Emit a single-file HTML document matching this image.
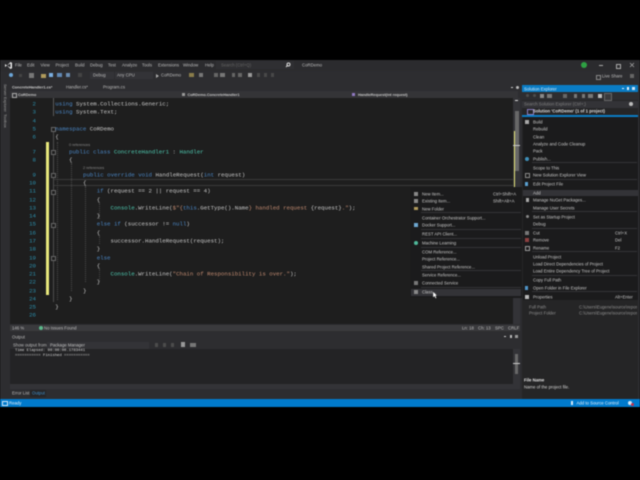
<!DOCTYPE html>
<html><head><meta charset="utf-8">
<style>
html,body{margin:0;padding:0;width:640px;height:480px;background:#000;overflow:hidden}
#r{position:absolute;left:0;top:0;width:640px;height:480px;filter:blur(.5px);font-family:"Liberation Sans",sans-serif;font-size:4.3px;color:#bdbdbd}
#r div,#r span.t{position:absolute;white-space:nowrap}
.b{position:absolute}
.m{transform:translateY(-50%)}
.c{font-family:"Liberation Mono",monospace;font-size:5.76px;color:#c8c8c8;transform:translateY(-50%);left:55.3px}
.n{font-family:"Liberation Mono",monospace;font-size:5.76px;color:#2b91af;transform:translateY(-50%);right:604px;text-align:right}
.k{color:#4a86c4}.g{color:#4ec9b0}.s{color:#c08a70}
.l{font-size:3.8px;color:#8a8a8a;transform:translateY(-50%)}
.i{font-size:4.3px;color:#c8c8c8;transform:translateY(-50%)}
.sep{height:1px;background:#333336}
.dg{width:0;border-left:1px dotted #4a4a4a}
</style></head><body><div id="r">
<!-- chrome -->
<div style="left:0;top:60px;width:640px;height:347px;background:#2d2d30"></div>
<div style="left:0;top:60px;width:640px;height:11px;background:#2b2b2e"></div>
<!-- logo -->
<svg class="b" style="left:4px;top:61px" width="9" height="9" viewBox="0 0 9 9"><path d="M1 3l2 1.500L6.500 1 8 1.800V7.200L6.500 8 3 4.500 1 6zM3 4.500l3.500 2V2.500z" fill="#e8e8e8" fill-rule="evenodd"/></svg>
<!-- menu -->
<div class="m" style="left:15px;top:65px">File</div><div class="m" style="left:27px;top:65px">Edit</div><div class="m" style="left:40.500px;top:65px">View</div><div class="m" style="left:55.500px;top:65px">Project</div><div class="m" style="left:75px;top:65px">Build</div><div class="m" style="left:90px;top:65px">Debug</div><div class="m" style="left:108px;top:65px">Test</div><div class="m" style="left:122px;top:65px">Analyze</div><div class="m" style="left:142px;top:65px">Tools</div><div class="m" style="left:158px;top:65px">Extensions</div><div class="m" style="left:183px;top:65px">Window</div><div class="m" style="left:205px;top:65px">Help</div>
<div style="left:216px;top:61px;width:78px;height:8px;background:#2f2f32"></div>
<div class="m" style="left:221px;top:65px;color:#666">Search (Ctrl+Q)</div>
<svg class="b" style="left:285px;top:62px" width="6" height="6" viewBox="0 0 6 6"><circle cx="3.500" cy="2.500" r="1.500" fill="none" stroke="#ddd"/><path d="M2.500 3.500L1 5" stroke="#ddd"/></svg>
<div class="m" style="left:302px;top:65px">CoRDemo</div>
<div style="left:581px;top:62px;width:6px;height:6px;border-radius:3px;background:#2ea043"></div>
<div style="left:599px;top:65px;width:4px;height:1px;background:#aaa"></div>
<div style="left:615.500px;top:63.500px;width:3px;height:3px;border:1px solid #aaa"></div>
<svg class="b" style="left:629px;top:62px" width="6" height="6" viewBox="0 0 6 6"><path d="M1 1l4 4M5 1l-4 4" stroke="#aaa" stroke-width=".7"/></svg>
<div class="m" style="left:602px;top:76px">Live Share</div>
<div style="left:596px;top:75px;width:3px;height:3px;border:.6px solid #888"></div>
<div style="left:630px;top:74px;width:4px;height:4px;background:#666"></div>
<!-- toolbar -->
<div style="left:9px;top:73px;width:4px;height:4px;border-radius:3px;background:#6ba5d6"></div>
<div style="left:19px;top:74px;width:3px;height:3px;background:#444"></div>
<div style="left:29px;top:73px;width:5px;height:5px;background:#777"></div>
<div style="left:41px;top:73.500px;width:5px;height:4px;background:#b09a5c"></div>
<div style="left:49px;top:73px;width:4px;height:4px;background:#7aaee0"></div>
<div style="left:57px;top:73px;width:5px;height:4px;background:#6088b4"></div>
<div style="left:66px;top:73px;width:4px;height:4px;background:#6a8cb0"></div>
<div style="left:78px;top:73px;width:4px;height:4px;background:#444"></div>
<div style="left:90px;top:71.500px;width:24px;height:7px;background:#333337"></div>
<div class="m" style="left:93px;top:75px">Debug</div>
<div style="left:115px;top:71.500px;width:38px;height:7px;background:#333337"></div>
<div class="m" style="left:117px;top:75px">Any CPU</div>
<div style="left:156px;top:73.500px;width:0;height:0;border-left:3px solid #aaa;border-top:2px solid transparent;border-bottom:2px solid transparent"></div>
<div class="m" style="left:161px;top:75px">CoRDemo</div>
<div style="left:189px;top:73px;width:5px;height:4px;background:#8a7c4a"></div>
<div style="left:199px;top:73px;width:4px;height:4px;background:#777"></div>
<div style="left:214px;top:73px;width:4px;height:4px;background:#666"></div><div style="left:220px;top:73px;width:5px;height:4px;background:#777"></div>
<div style="left:232px;top:73px;width:3px;height:4px;background:#666"></div><div style="left:238px;top:73px;width:4px;height:4px;background:#666"></div>
<div style="left:248px;top:73px;width:4px;height:4px;background:#999"></div><div style="left:257px;top:73px;width:3px;height:4px;background:#484848"></div><div style="left:264px;top:73px;width:3px;height:4px;background:#484848"></div><div style="left:271px;top:73px;width:3px;height:4px;background:#484848"></div>
<!-- left strip text -->
<div style="left:3px;top:84px;font-size:4px;writing-mode:vertical-rl;color:#a0a0a0">Server Explorer</div>
<div style="left:3px;top:114px;font-size:4px;writing-mode:vertical-rl;color:#a0a0a0">Toolbox</div>
<!-- doc tabs -->
<div class="m" style="left:12px;top:87.300px;color:#ccc;font-size:3.900px;font-weight:bold">ConcreteHandler1.cs*</div>
<div class="m" style="left:66px;top:87.300px">Handler.cs*</div>
<div class="m" style="left:103px;top:87.300px">Program.cs</div>
<!-- nav bar -->
<div style="left:10px;top:90.500px;width:508px;height:7.500px;background:#343437"></div>
<div class="m" style="left:18px;top:94.500px;font-size:3.800px;color:#c4c4c4;font-weight:bold">CoRDemo</div>
<div style="left:12px;top:93px;width:3px;height:3px;border:.5px solid #aaa"></div>
<div class="m" style="left:187.500px;top:94.500px;font-size:3.800px;color:#c4c4c4;font-weight:bold">CoRDemo.ConcreteHandler1</div>
<div style="left:182px;top:93px;width:3px;height:3px;background:#999"></div>
<div class="m" style="left:358px;top:94.500px;font-size:3.800px;color:#c4c4c4;font-weight:bold">HandleRequest(int request)</div>
<div style="left:352px;top:93px;width:3px;height:3px;background:#8f78c0"></div>
<div style="left:511px;top:87px;width:2px;height:1px;background:#ccc"></div><div style="left:516px;top:85.500px;width:3px;height:3px;border-radius:2px;background:#bbb"></div>
<!-- editor -->
<div style="left:10px;top:98px;width:503px;height:226px;background:#1e1e1e"></div>
<div style="left:513px;top:98px;width:7px;height:226px;background:#333337"></div>
<div style="left:514.500px;top:111px;width:4px;height:60px;background:#686868"></div>
<div style="left:514px;top:131px;width:1px;height:95px;background:#e4e47a"></div>
<div style="left:513px;top:145px;width:7px;height:.7px;background:#ccc"></div>
<div style="left:515px;top:100px;width:3px;height:1px;background:#ddd"></div>
<div style="left:46px;top:141.500px;width:3px;height:153.500px;background:#e8e87c"></div>
<div style="left:54px;top:178.700px;width:459px;height:7.800px;border:.5px solid #3a3a3a;border-width:.6px 0;box-sizing:border-box"></div>
<!-- guides -->
<div class="dg" style="left:57px;top:142px;height:158px"></div>
<div class="dg" style="left:70.500px;top:163px;height:128px"></div>
<div class="dg" style="left:84.500px;top:186px;height:96px"></div>
<div class="dg" style="left:98.500px;top:203px;height:16px;border-color:#444"></div>
<div class="dg" style="left:98.500px;top:236px;height:8px;border-color:#444"></div>
<div class="dg" style="left:98.500px;top:269px;height:12px;border-color:#444"></div>
<div style="left:52.500px;top:98px;width:.7px;height:18px;background:#5a5a5a"></div>
<div style="left:52.500px;top:130px;width:.7px;height:172px;background:#4c4c4c"></div>
<div style="left:50.500px;top:127px;width:3px;height:3px;border:.5px solid #666;background:#1e1e1e"></div>
<div style="left:50.500px;top:150px;width:3px;height:3px;border:.5px solid #666;background:#1e1e1e"></div>
<div style="left:50.500px;top:173px;width:3px;height:3px;border:.5px solid #666;background:#1e1e1e"></div>
<div style="left:50.500px;top:190px;width:3px;height:3px;border:.5px solid #666;background:#1e1e1e"></div>
<div style="left:50.500px;top:223px;width:3px;height:3px;border:.5px solid #666;background:#1e1e1e"></div>
<div style="left:50.500px;top:256px;width:3px;height:3px;border:.5px solid #666;background:#1e1e1e"></div>
<!-- line numbers -->
<div class="n" style="top:104px">2</div><div class="n" style="top:112.300px">3</div><div class="n" style="top:120.700px">4</div><div class="n" style="top:129px">5</div><div class="n" style="top:137.300px">6</div><div class="n" style="top:151.700px">7</div><div class="n" style="top:160px">8</div><div class="n" style="top:174.700px">9</div><div class="n" style="top:183.300px">10</div><div class="n" style="top:191.300px">11</div><div class="n" style="top:199.600px">12</div><div class="n" style="top:207.800px">13</div><div class="n" style="top:216.100px">14</div><div class="n" style="top:224.400px">15</div><div class="n" style="top:232.600px">16</div><div class="n" style="top:240.900px">17</div><div class="n" style="top:249.200px">18</div><div class="n" style="top:257.500px">19</div><div class="n" style="top:265.700px">20</div><div class="n" style="top:274px">21</div><div class="n" style="top:282.300px">22</div><div class="n" style="top:290.500px">23</div><div class="n" style="top:298.800px">24</div><div class="n" style="top:307px">25</div><div class="n" style="top:315.300px">26</div>
<!-- code -->
<div class="c" style="top:104px"><span class="k">using</span> System.Collections.Generic;</div>
<div class="c" style="top:112.300px"><span class="k">using</span> System.Text;</div>
<div class="c" style="top:129px"><span class="k">namespace</span> CoRDemo</div>
<div class="c" style="top:137.300px">{</div>
<div class="l" style="left:69px;top:145px">0 references</div>
<div class="c" style="top:151.700px;left:69px"><span class="k">public class</span> <span class="g">ConcreteHandler1</span> : <span class="g">Handler</span></div>
<div class="c" style="top:160px;left:69px">{</div>
<div class="l" style="left:83px;top:168px">2 references</div>
<div class="c" style="top:174.700px;left:83px"><span class="k">public override void</span> HandleRequest(<span class="k">int</span> request)</div>
<div class="c" style="top:183.300px;left:83px">{</div>
<div class="c" style="top:191.300px;left:96.700px"><span class="k">if</span> (request == 2 || request == 4)</div>
<div class="c" style="top:199.600px;left:96.700px">{</div>
<div class="c" style="top:207.800px;left:110.500px"><span class="g">Console</span>.WriteLine(<span class="s">$"{</span><span class="k">this</span>.GetType().Name<span class="s">} handled request </span>{request}<span class="s">."</span>);</div>
<div class="c" style="top:216.100px;left:96.700px">}</div>
<div class="c" style="top:224.400px;left:96.700px"><span class="k">else if</span> (successor != <span class="k">null</span>)</div>
<div class="c" style="top:232.600px;left:96.700px">{</div>
<div class="c" style="top:240.900px;left:110.500px">successor.HandleRequest(request);</div>
<div class="c" style="top:249.200px;left:96.700px">}</div>
<div class="c" style="top:257.500px;left:96.700px"><span class="k">else</span></div>
<div class="c" style="top:265.700px;left:96.700px">{</div>
<div class="c" style="top:274px;left:110.500px"><span class="g">Console</span>.WriteLine(<span class="s">"Chain of Responsibility is over."</span>);</div>
<div class="c" style="top:282.300px;left:96.700px">}</div>
<div class="c" style="top:290.500px;left:83px">}</div>
<div class="c" style="top:298.800px;left:69px">}</div>
<div class="c" style="top:307px">}</div>
<!-- editor status -->
<div style="left:10px;top:324.500px;width:510px;height:6.500px;background:#3a3a3d"></div>
<div class="m" style="left:12px;top:328px">146 %</div>
<div style="left:38.500px;top:326px;width:4px;height:4px;border-radius:2px;background:#5cb88a"></div>
<div class="m" style="left:44px;top:328px">No Issues Found</div>
<div class="m" style="left:462px;top:328px">Ln: 18</div><div class="m" style="left:478px;top:328px">Ch: 13</div><div class="m" style="left:495px;top:328px">SPC</div><div class="m" style="left:508px;top:328px">CRLF</div>
<!-- output -->
<div class="m" style="left:12px;top:337px">Output</div>
<div style="left:504px;top:336px;width:2px;height:1px;background:#ccc"></div><div style="left:510px;top:335px;width:2px;height:3px;background:#bbb"></div><div style="left:515px;top:335px;width:3px;height:3px;background:#999"></div>
<div class="m" style="left:13px;top:345px">Show output from:</div>
<div style="left:47px;top:341.500px;width:102px;height:7px;background:#333337"></div>
<div class="m" style="left:50px;top:345px;color:#c4c4c4">Package Manager</div>
<div style="left:155px;top:343px;width:3px;height:4px;background:#4c4c4c"></div><div style="left:163px;top:343px;width:3px;height:4px;background:#4c4c4c"></div><div style="left:171px;top:343px;width:3px;height:4px;background:#4c4c4c"></div><div style="left:181px;top:342px;width:4px;height:5px;background:#999"></div><div style="left:190px;top:343px;width:6px;height:4px;background:#777"></div>
<div style="left:10px;top:349px;width:503px;height:35px;background:#232325"></div>
<div style="left:513px;top:349px;width:7px;height:35px;background:#333337"></div>
<div style="left:515px;top:354px;width:3px;height:20px;background:#686868"></div>
<div style="left:513px;top:363px;width:7px;height:.7px;background:#ccc"></div>
<div style="left:10px;top:384px;width:510px;height:5px;background:#333337"></div>
<div class="c" style="left:15px;top:351.300px;font-size:3.900px;color:#d8d8d8">Time Elapsed: 00:00:00.1783441</div>
<div class="c" style="left:15px;top:356.300px;font-size:3.900px;color:#d8d8d8">=========== Finished ===========</div>
<div class="m" style="left:12px;top:393px">Error List</div>
<div style="left:30px;top:390px;width:16px;height:7px;background:#252527"></div>
<div class="m" style="left:32px;top:393px;color:#3f8fca">Output</div>
<!-- solution explorer -->
<div style="left:522px;top:85px;width:116px;height:7px;background:#0a7cc4"></div>
<div class="m" style="left:524px;top:88.500px;color:#d8ecfa">Solution Explorer</div>
<div style="left:622px;top:88px;width:2px;height:1px;background:#e4f1fb"></div><div style="left:627px;top:87px;width:2px;height:3px;background:#e4f1fb"></div><div style="left:632px;top:87px;width:3px;height:3px;background:#cfe6f7"></div>
<div style="left:522px;top:92px;width:116px;height:307px;background:#252526"></div>
<div style="left:522px;top:92px;width:116px;height:8px;background:#2d2d30"></div>
<div style="left:526px;top:94px;width:3px;height:3px;border-radius:2px;background:#4c4c4c"></div><div style="left:533px;top:94px;width:3px;height:3px;border-radius:2px;background:#4c4c4c"></div><div style="left:540px;top:93.500px;width:4px;height:4px;background:#888"></div><div style="left:547px;top:93.500px;width:5px;height:4px;background:#777"></div><div style="left:563px;top:93.500px;width:4px;height:4px;background:#666"></div><div style="left:574px;top:93.500px;width:3px;height:4px;background:#777"></div><div style="left:582px;top:93.500px;width:3px;height:4px;background:#777"></div><div style="left:588px;top:93.500px;width:5px;height:4px;background:#777"></div><div style="left:598px;top:93.500px;width:4px;height:4px;background:#bbb"></div>
<div style="left:603.500px;top:92.500px;width:6px;height:6px;border:.5px solid #666;background:#3a3a3d"></div>
<div style="left:522px;top:100.500px;width:116px;height:7px;background:#333337"></div>
<div class="m" style="left:524px;top:104px;color:#808080">Search Solution Explorer (Ctrl+;)</div>
<div style="left:629px;top:102px;width:4px;height:4px;border-radius:2px;background:#bbb"></div>
<div style="left:527px;top:109px;width:5px;height:4px;border:.5px solid #8a7cc0"></div>
<div class="m" style="left:533px;top:111.300px;color:#ddd;font-weight:bold">Solution 'CoRDemo' (1 of 1 project)</div>
<div style="left:522px;top:115px;width:116px;height:2px;background:#0a7cc4"></div>
<div class="m" style="left:529px;top:306.700px;color:#909090">Full Path</div><div class="m" style="left:579px;top:306.700px;color:#909090;width:58px;overflow:hidden">C:\Users\Eugene\source\repos\Co</div>
<div class="m" style="left:529px;top:313.300px;color:#909090">Project Folder</div><div class="m" style="left:579px;top:313.300px;color:#909090;width:58px;overflow:hidden">C:\Users\Eugene\source\repos\Co</div>
<div class="m" style="left:524px;top:380.300px;color:#e4e4e4;font-weight:bold">File Name</div>
<div class="m" style="left:524px;top:386.500px;color:#d4d4d4">Name of the project file.</div>
<!-- status bar -->
<div style="left:0;top:399px;width:640px;height:8px;background:#007acc"></div>
<div style="left:2px;top:401px;width:4px;height:3px;border:.6px solid #cfe6f7"></div>
<div class="m" style="left:9px;top:403px;color:#e4f1fb">Ready</div>
<div class="m" style="left:576.500px;top:403px;color:#e4f1fb">Add to Source Control</div>
<div style="left:571px;top:401px;width:2px;height:4px;background:#cfe6f7"></div>
<div style="left:628px;top:400.500px;width:4px;height:4px;background:#cfe6f7;border-radius:2px"></div>
<div style="left:631px;top:403px;width:3px;height:3px;background:#c4304a;border-radius:2px"></div>
<!-- context menu right -->
<div style="left:522.500px;top:117px;width:115.500px;height:183px;background:#1b1b1c"></div>
<div style="left:523px;top:190px;width:115px;height:6px;background:#333337"></div>
<div class="i" style="left:533px;top:122px">Build</div><div class="i" style="left:533px;top:129px">Rebuild</div><div class="i" style="left:533px;top:136.500px">Clean</div><div class="i" style="left:533px;top:144px">Analyze and Code Cleanup</div><div class="i" style="left:533px;top:151px">Pack</div><div class="i" style="left:533px;top:158.500px">Publish...</div>
<div class="sep" style="left:532px;top:162px;width:105px"></div>
<div class="i" style="left:533px;top:167.500px">Scope to This</div><div class="i" style="left:533px;top:175px">New Solution Explorer View</div>
<div class="sep" style="left:532px;top:179px;width:105px"></div>
<div class="i" style="left:533px;top:184px">Edit Project File</div>
<div class="i" style="left:533px;top:192.700px">Add</div><div class="i" style="left:533px;top:200px">Manage NuGet Packages...</div><div class="i" style="left:533px;top:207.500px">Manage User Secrets</div>
<div class="sep" style="left:532px;top:210.500px;width:105px"></div>
<div class="i" style="left:533px;top:216.500px">Set as Startup Project</div><div class="i" style="left:533px;top:224px">Debug</div>
<div class="sep" style="left:532px;top:228px;width:105px"></div>
<div class="i" style="left:533px;top:233px">Cut</div><div class="i" style="left:615px;top:233px">Ctrl+X</div><div class="i" style="left:533px;top:240px">Remove</div><div class="i" style="left:615px;top:240px">Del</div><div class="i" style="left:533px;top:247.500px">Rename</div><div class="i" style="left:615px;top:247.500px">F2</div>
<div class="sep" style="left:532px;top:251px;width:105px"></div>
<div class="i" style="left:533px;top:256.500px">Unload Project</div><div class="i" style="left:533px;top:264px">Load Direct Dependencies of Project</div><div class="i" style="left:533px;top:271px">Load Entire Dependency Tree of Project</div>
<div class="sep" style="left:532px;top:275px;width:105px"></div>
<div class="i" style="left:533px;top:280px">Copy Full Path</div><div class="i" style="left:533px;top:287.500px">Open Folder in File Explorer</div>
<div class="sep" style="left:532px;top:291px;width:105px"></div>
<div class="i" style="left:533px;top:296.500px">Properties</div><div class="i" style="left:615px;top:296.500px">Alt+Enter</div>
<div style="left:524.500px;top:120px;width:4px;height:4px;background:#a8a8a8"></div>
<div style="left:525px;top:156.500px;width:4px;height:4px;border-radius:2px;background:#3f8fb8"></div>
<div style="left:525px;top:173px;width:3px;height:3px;border:.5px solid #888"></div>
<div style="left:525px;top:182px;width:3px;height:4px;background:#5a9fd0"></div>
<div style="left:526px;top:198px;width:3px;height:4px;background:#a8a8a8"></div>
<div style="left:526px;top:214.500px;width:3px;height:3px;border-radius:2px;background:#888"></div>
<div style="left:525px;top:231px;width:4px;height:4px;background:#777"></div>
<div style="left:525px;top:238px;width:4px;height:4px;background:#8c4040"></div>
<div style="left:525px;top:245.500px;width:3px;height:3px;border:.5px solid #999"></div>
<div style="left:525px;top:285.500px;width:3px;height:4px;background:#4f94c8"></div>
<div style="left:525px;top:294.500px;width:4px;height:4px;background:#b8b8b8"></div>
<!-- context menu left -->
<div style="left:410px;top:187px;width:112px;height:111px;background:#1b1b1c"></div>
<div style="left:411px;top:288.500px;width:110px;height:7px;background:#333337"></div>
<div class="i" style="left:422px;top:194px">New Item...</div><div class="i" style="left:493px;top:194px">Ctrl+Shift+A</div><div class="i" style="left:422px;top:201px">Existing Item...</div><div class="i" style="left:493px;top:201px">Shift+Alt+A</div><div class="i" style="left:422px;top:208.500px">New Folder</div>
<div class="sep" style="left:421px;top:211.500px;width:100px"></div>
<div class="i" style="left:422px;top:217.500px">Container Orchestrator Support...</div><div class="i" style="left:422px;top:225px">Docker Support...</div>
<div class="sep" style="left:421px;top:228.500px;width:100px"></div>
<div class="i" style="left:422px;top:233.500px">REST API Client...</div>
<div class="sep" style="left:421px;top:237.500px;width:100px"></div>
<div class="i" style="left:422px;top:243px">Machine Learning</div>
<div class="sep" style="left:421px;top:247px;width:100px"></div>
<div class="i" style="left:422px;top:252px">COM Reference...</div><div class="i" style="left:422px;top:259px">Project Reference...</div><div class="i" style="left:422px;top:266.500px">Shared Project Reference...</div>
<div class="sep" style="left:421px;top:270px;width:100px"></div>
<div class="i" style="left:422px;top:275px">Service Reference...</div><div class="i" style="left:422px;top:283px">Connected Service</div>
<div class="sep" style="left:421px;top:287px;width:100px"></div>
<div class="i" style="left:422px;top:292px">Class...</div>
<div style="left:414px;top:192px;width:4px;height:4px;background:#888"></div>
<div style="left:414px;top:199px;width:4px;height:4px;background:#888"></div>
<div style="left:414px;top:206.500px;width:4px;height:3px;background:#b09a5c"></div>
<div style="left:414px;top:223px;width:4px;height:4px;background:#6ea7d0"></div>
<div style="left:414px;top:241px;width:4px;height:4px;border-radius:2px;background:#4fb89a"></div>
<div style="left:414px;top:281px;width:4px;height:4px;background:#777"></div>
<div style="left:414px;top:290px;width:4px;height:4px;background:#888"></div>
<!-- cursor -->
<svg class="b" style="left:432px;top:291px" width="6" height="8" viewBox="0 0 6 8"><path d="M1 .5V6.500L2.500 5.200 3.500 7.500 4.500 7 3.600 4.800H5.200z" fill="#fff" stroke="#222" stroke-width=".3"/></svg>
</div></body></html>
